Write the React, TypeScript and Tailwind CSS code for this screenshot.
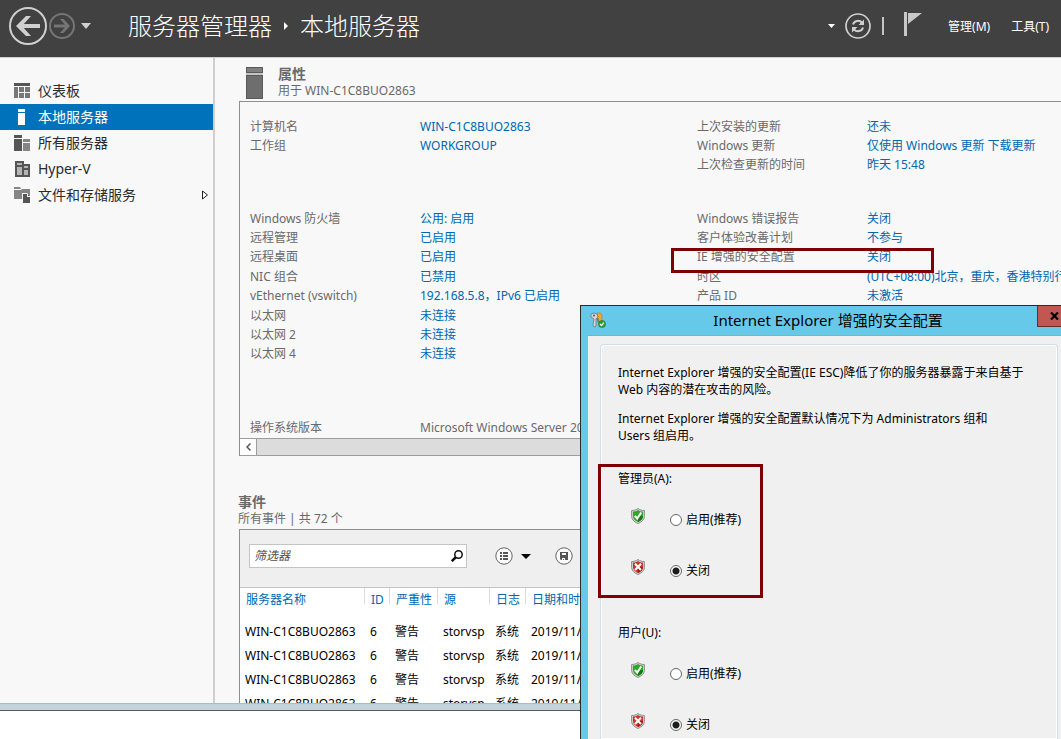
import React from "react";

type Row = [string, string, string, string];

const identityRows: Row[] = [
  ["计算机名", "WIN-C1C8BUO2863", "上次安装的更新", "还未"],
  ["工作组", "WORKGROUP", "Windows 更新", "仅使用 Windows 更新 下载更新"],
  ["", "", "上次检查更新的时间", "昨天 15:48"],
];

const networkRows: Row[] = [
  ["Windows 防火墙", "公用: 启用", "Windows 错误报告", "关闭"],
  ["远程管理", "已启用", "客户体验改善计划", "不参与"],
  ["远程桌面", "已启用", "IE 增强的安全配置", "关闭"],
  ["NIC 组合", "已禁用", "时区", "(UTC+08:00)北京，重庆，香港特别行政区，乌鲁木齐"],
  ["vEthernet (vswitch)", "192.168.5.8，IPv6 已启用", "产品 ID", "未激活"],
  ["以太网", "未连接", "", ""],
  ["以太网 2", "未连接", "", ""],
  ["以太网 4", "未连接", "", ""],
];

const events = [1, 2, 3, 4];

function BackIcon() {
  return (
    <svg width="38" height="38" viewBox="0 0 38 38" fill="none" stroke="#d0d0d0">
      <circle cx="19" cy="19" r="18" strokeWidth="2" />
      <path d="M31 19H10" strokeWidth="4" />
      <path d="M7 19 17 9h5l-9 10 9 10h-5z" fill="#d0d0d0" stroke="none" />
    </svg>
  );
}

function ForwardIcon() {
  return (
    <svg width="26" height="26" viewBox="0 0 26 26" fill="none" stroke="#757575">
      <circle cx="13" cy="13" r="12" strokeWidth="2" />
      <path d="M5 13h13" strokeWidth="3" />
      <path d="M21 13 14.500 6H11l6 7-6 7h3.500z" fill="#757575" stroke="none" />
    </svg>
  );
}

function RefreshIcon() {
  return (
    <svg width="26" height="26" viewBox="0 0 26 26" fill="none" stroke="#cfcfcf">
      <circle cx="13" cy="13" r="12" strokeWidth="1.700" />
      <path d="M8 11.500c1-4 6.500-5 9-1.800M18 14.500c-1 4-6.500 5-9 1.800" strokeWidth="2" />
      <path d="M19 6.500v5.500h-5.500zM7 19.500V14h5.500z" fill="#cfcfcf" stroke="none" />
    </svg>
  );
}

function DashboardIcon() {
  return (
    <svg width="16" height="16" viewBox="0 0 16 16" fill="#777">
      <path d="M0 0h16v3H0z" fill="#555" />
      <path d="M0 4h4v11H0zM5 4h5v5H5zM11 4h5v5h-5zM5 10h5v5H5zM11 10h5v5h-5z" />
    </svg>
  );
}

function LocalIcon() {
  return (
    <svg width="16" height="16" viewBox="0 0 16 16" fill="#fff">
      <path d="M4 0h7v3H4zM4 4h7v12H4z" />
    </svg>
  );
}

function AllServersIcon() {
  return (
    <svg width="16" height="16" viewBox="0 0 16 16" fill="#555">
      <path d="M0 0h8v3H0zM0 4h8v12H0z" />
      <path d="M9 4h7v3H9zM9 8h7v8H9z" fill="#858585" />
    </svg>
  );
}

function HyperVIcon() {
  return (
    <svg width="16" height="16" viewBox="0 0 16 16" fill="#555">
      <path d="M1 0h9v3h6v13H1z" />
      <path d="M3 2h5v2H3zM3 6h5v8H3zM10 5h4v2h-4zM10 9h4v5h-4z" fill="#b5b5b5" />
    </svg>
  );
}

function StorageIcon() {
  return (
    <svg width="16" height="16" viewBox="0 0 16 16" fill="#858585">
      <path d="M0 0h6l1 2H0zM0 3h7l1-1h8v10H0z" />
      <path d="M8 6h5l3 3v7H8z" fill="#f7f7f7" />
      <path d="M9 7h4v3h3v6H9z" fill="#555" />
      <path d="M14 7l2 2h-2z" fill="#555" />
    </svg>
  );
}

function KeysIcon() {
  return (
    <svg width="16" height="16" viewBox="0 0 16 16">
      <path d="M7 1h3l2 2v4l-1 3H9z" fill="#eba834" stroke="#b5731d" strokeWidth=".6" />
      <path d="M1 2l3-1 3 1 1 3-2 2v7l-2 1-1-2 1-6-3-2z" fill="#d5d5d5" stroke="#777" strokeWidth=".8" />
      <circle cx="4" cy="3.500" r="1" fill="#555" />
      <path d="M7 6l2 5" stroke="#777" strokeWidth="1.500" />
      <circle cx="12" cy="12" r="3.600" fill="#2e9e2c" stroke="#1c701f" strokeWidth=".5" />
      <path d="M10 12l1.500 1.600 2.500-3" fill="none" stroke="#fff" strokeWidth="1.300" />
    </svg>
  );
}

function Shield({ on }: { on: boolean }) {
  return (
    <svg width="14" height="16" viewBox="0 0 14 16" aria-hidden="true">
      <path
        d="M7 .5C5 2 3 2.500.600 2.500v6C.8 12 3.500 14 7 15.500c3.500-1.500 6.200-3.500 6.400-7v-6C11 2.500 9 2 7 .5z"
        fill="#cfd3d0"
        stroke="#8b8f8c"
        strokeWidth="1"
      />
      <path
        d="M7 2C5.500 3 4 3.500 2 3.600v4.900c.2 2.700 2.200 4.300 5 5.600 2.800-1.300 4.800-2.900 5-5.600V3.600C10 3.500 8.500 3 7 2z"
        fill={on ? "#2fa52b" : "#d2302d"}
      />
      <path d="M7 8h5c0 3-2.200 4.800-5 6.100z" fill={on ? "#137a14" : "#a51617"} />
      {on ? (
        <path d="M3.800 7.800l2.400 2.700L10.200 4.500" fill="none" stroke="#fff" strokeWidth="2" />
      ) : (
        <path d="M4 4.800l6 6.200M10 4.800l-6 6.200" stroke="#fff" strokeWidth="2" />
      )}
    </svg>
  );
}

const navItems = [
  { label: "仪表板", icon: <DashboardIcon /> },
  { label: "本地服务器", icon: <LocalIcon />, active: true },
  { label: "所有服务器", icon: <AllServersIcon /> },
  { label: "Hyper-V", icon: <HyperVIcon /> },
  { label: "文件和存储服务", icon: <StorageIcon />, expandable: true },
];

function Header() {
  return (
    <header className="flex h-[58px] shrink-0 items-center border-b border-[#d0d0d0] bg-[#414141] pb-[5px] text-white">
      <button aria-label="后退" className="ml-[9px]">
        <BackIcon />
      </button>
      <button aria-label="前进" className="ml-[2px]">
        <ForwardIcon />
      </button>
      <button aria-label="历史记录" className="ml-[6px]">
        <svg width="10" height="6" viewBox="0 0 10 6">
          <path d="M0 0h10L5 6z" fill="#d0d0d0" />
        </svg>
      </button>
      <h1 className="ml-[37px] flex items-center gap-[11px] text-2xl font-light whitespace-nowrap">
        服务器管理器
        <svg width="6" height="8" viewBox="0 0 6 8">
          <path d="M1 0l4 4-4 4z" fill="#fff" />
        </svg>
        本地服务器
      </h1>
      <div className="ml-auto flex items-center pr-[12px]">
        <button aria-label="更多">
          <svg width="7" height="4" viewBox="0 0 7 4">
            <path d="M0 0h7L3.500 4z" fill="#fff" />
          </svg>
        </button>
        <button aria-label="刷新" className="ml-[10px]">
          <RefreshIcon />
        </button>
        <span className="ml-[11px] h-[18px] w-[2px] bg-[#c4c4c4]" />
        <button aria-label="通知" className="ml-[20px] -mt-1">
          <svg width="18" height="24" viewBox="0 0 18 24" fill="#c8c8c8">
            <path d="M0 0h3v24H0zM4 1h14L4 12z" />
          </svg>
        </button>
        <button className="mt-[2px] ml-[26px] text-xs">管理(M)</button>
        <button className="mt-[2px] ml-[21px] text-xs">工具(T)</button>
      </div>
    </header>
  );
}

function Sidebar() {
  return (
    <nav className="w-[215px] shrink-0 border-r-2 border-[#cfcfcf] pt-[20px]">
      {navItems.map((item) => (
        <a
          key={item.label}
          href="#"
          className={
            item.active
              ? "flex h-[26px] items-center bg-[#0072bc] pl-[14px] text-sm text-white"
              : "flex h-[26px] items-center pl-[14px] text-sm text-[#2b2b2b]"
          }
        >
          {item.icon}
          <span className="ml-2">{item.label}</span>
          {item.expandable && (
            <svg className="mr-1 ml-auto" width="8" height="10" viewBox="0 0 8 10">
              <path d="M1.500 1v8L6.500 5z" fill="#fff" stroke="#222" />
            </svg>
          )}
        </a>
      ))}
    </nav>
  );
}

function PropertyGroup({ rows, className }: { rows: Row[]; className: string }) {
  return (
    <div className={className}>
      {rows.map((r, i) => (
        <div
          key={i}
          className="grid grid-cols-[170px_277px_170px_1fr] items-center whitespace-nowrap text-[#6a6a6a]"
        >
          <span>{r[0]}</span>
          <a href="#" className="text-[#0067b0]">{r[1]}</a>
          <span>{r[2]}</span>
          <a href="#" className="text-[#0067b0]">{r[3]}</a>
        </div>
      ))}
    </div>
  );
}

function Properties() {
  return (
    <section className="ml-6">
      <div className="flex h-[43px] pt-[8px] pl-[7px]">
        <svg className="mt-px" width="17" height="32" viewBox="0 0 17 32">
          <path d="M0 0h17v32H0z" fill="#5a5a5a" />
          <path d="M1 1h15v4H1z" fill="#808080" />
          <path d="M0 6h17v2H0z" fill="#c4c4c4" />
          <path d="M1 9h15v22H1z" fill="#6e6e6e" />
        </svg>
        <div className="ml-[15px] text-[#6a6a6a]">
          <h2 className="text-sm leading-4 font-bold">属性</h2>
          <p className="text-xs leading-[18px]">用于 WIN-C1C8BUO2863</p>
        </div>
      </div>
      <div className="relative overflow-hidden border-t border-l border-[#8f8f8f] text-xs">
        <div className="pt-[15px] pl-[10px]">
          <PropertyGroup rows={identityRows} className="grid h-[58px] auto-rows-fr" />
          <PropertyGroup rows={networkRows} className="mt-[34px] grid h-[155px] auto-rows-fr" />
          <div className="mt-[54px] flex h-[20px] items-center whitespace-nowrap text-[#6a6a6a]">
            <span className="w-[170px]">操作系统版本</span>
            <span>Microsoft Windows Server 2012 R2 Standard</span>
          </div>
        </div>
        <div className="flex h-[18px] border-y border-[#9d9d9d] bg-[#dcdcdc]">
          <button
            aria-label="向左滚动"
            className="flex w-[17px] items-center justify-center border-r border-[#9d9d9d] bg-white"
          >
            <svg width="5" height="8" viewBox="0 0 5 8" fill="none" stroke="#555" strokeWidth="1.500">
              <path d="M4.500.5L1 4l3.500 3.500" />
            </svg>
          </button>
        </div>
        <div className="absolute top-[146px] left-[431px] h-[25px] w-[263px] border-3 border-[#7f0000]" />
      </div>
    </section>
  );
}

function Events() {
  return (
    <section className="mt-[38px] flex min-h-0 flex-1 flex-col">
      <div className="ml-[23px] h-[35px] text-[#6a6a6a]">
        <h2 className="text-sm leading-4 font-bold">事件</h2>
        <p className="text-xs leading-[18px]">所有事件 | 共 72 个</p>
      </div>
      <div className="ml-6 min-h-0 flex-1 overflow-hidden border-t border-l border-[#8f8f8f] bg-white">
        <div className="flex h-[57px] items-center bg-[#efefef] pb-[5px] pl-[9px]">
          <label className="flex h-[24px] w-[218px] items-center border border-[#c4c4c4] bg-white pr-[3px] pl-[4px]">
            <input
              aria-label="筛选器"
              placeholder="筛选器"
              className="min-w-0 flex-1 text-xs italic outline-none placeholder:text-[#505050]"
            />
            <svg width="12" height="12" viewBox="0 0 12 12" fill="none" stroke="#111">
              <circle cx="7.500" cy="4.500" r="3.700" strokeWidth="1.500" />
              <path d="M5 7L.8 11.200" strokeWidth="2.500" />
            </svg>
          </label>
          <button aria-label="视图" className="ml-[28px]">
            <svg width="18" height="18" viewBox="0 0 18 18">
              <circle cx="9" cy="9" r="8.200" fill="#fafafa" stroke="#666" />
              <path d="M5 5h2v2H5zM8 5h5v2H8zM5 8h2v2H5zM8 8h5v2H8zM5 11h2v2H5zM8 11h5v2H8z" fill="#555" />
            </svg>
          </button>
          <button aria-label="视图选项" className="ml-[8px]">
            <svg width="10" height="5" viewBox="0 0 10 5">
              <path d="M0 0h10L5 5z" />
            </svg>
          </button>
          <button aria-label="保存" className="ml-[24px]">
            <svg width="18" height="18" viewBox="0 0 18 18">
              <circle cx="9" cy="9" r="8.200" fill="#fafafa" stroke="#666" />
              <path d="M5 5h8v8H6l-1-1z" fill="#555" />
              <path d="M7 6h4v2H7z" fill="#fafafa" />
              <path d="M7 11h3v2H9v-1H8v1H7z" fill="#fafafa" />
            </svg>
          </button>
        </div>
        <table className="w-full table-fixed border-t border-[#c4c4c4] text-left text-xs whitespace-nowrap">
          <colgroup>
            <col className="w-[125px]" />
            <col className="w-[25px]" />
            <col className="w-[48px]" />
            <col className="w-[52px]" />
            <col className="w-[36px]" />
            <col />
          </colgroup>
          <thead>
            <tr className="h-[32px] align-top text-[#0067b0]">
              {["服务器名称", "ID", "严重性", "源", "日志", "日期和时间"].map((h) => (
                <th key={h} className="p-0 font-normal">
                  <div className="h-[16px] border-r border-[#dcdcdc] pt-[4px] pl-[6px] leading-4">{h}</div>
                </th>
              ))}
            </tr>
          </thead>
          <tbody>
            {events.map((n) => (
              <tr key={n} className="h-[24px] text-black">
                {["WIN-C1C8BUO2863", "6", "警告", "storvsp", "系统", "2019/11/20 15:48"].map((c) => (
                  <td key={c} className="p-0 pl-[5px]">{c}</td>
                ))}
              </tr>
            ))}
          </tbody>
        </table>
      </div>
    </section>
  );
}

function ChoiceGroup({ title, name }: { title: string; name: string }) {
  return (
    <fieldset>
      <legend className="leading-4">{title}</legend>
      <div className="flex flex-col gap-[31px] pt-[21px] pl-[13px]">
        {[
          { on: true, label: "启用(推荐)" },
          { on: false, label: "关闭" },
        ].map((o) => (
          <div key={o.label} className="flex h-[20px] items-start">
            <Shield on={o.on} />
            <label className="mt-1 ml-[25px] flex items-center gap-1 leading-4">
              <input
                type="radio"
                name={name}
                defaultChecked={!o.on}
                className="size-[12px] appearance-none rounded-full border border-[#666] bg-white checked:bg-[radial-gradient(circle,#1c1c1c_3px,#fff_4px)]"
              />
              {o.label}
            </label>
          </div>
        ))}
      </div>
    </fieldset>
  );
}

function SecurityDialog() {
  return (
    <div
      role="dialog"
      aria-labelledby="dialog-title"
      className="absolute top-[305px] right-0 bottom-0 left-[580px] flex flex-col overflow-hidden border-t border-l border-[#2b2b2b] bg-[#66c9e9] pl-[7px] text-xs text-black"
    >
      <div className="flex h-[29px] shrink-0 items-start">
        <span className="mt-[6px] ml-[2px]">
          <KeysIcon />
        </span>
        <h2 id="dialog-title" className="flex-1 pl-[13px] text-center text-[15px] leading-[29px]">
          Internet Explorer 增强的安全配置
        </h2>
        <button
          aria-label="关闭"
          className="flex h-[21px] w-[24px] items-center justify-end border-b border-l border-[#6b2a26] bg-[#c1584f] pr-[2px]"
        >
          <svg width="9" height="8" viewBox="0 0 9 8">
            <path d="M1 .5l7 7M8 .5l-7 7" stroke="#000" strokeWidth="2.200" />
          </svg>
        </button>
      </div>
      <div className="min-h-0 flex-1 border-t border-[#7eb0c6] bg-[#f0f0f0] pt-[8px] pr-[3px] pl-[12px]">
        <div className="relative h-full rounded-t border border-b-0 border-[#d0deea] pt-[19px] pl-[17px] inset-shadow-[0_0_0_1px_#fff]">
          <p className="leading-[17px] whitespace-nowrap">
            Internet Explorer 增强的安全配置(IE ESC)降低了你的服务器暴露于来自基于
            <br />
            Web 内容的潜在攻击的风险。
          </p>
          <p className="mt-[12px] mb-[27px] leading-[17px] whitespace-nowrap">
            Internet Explorer 增强的安全配置默认情况下为 Administrators 组和
            <br />
            Users 组启用。
          </p>
          <ChoiceGroup title="管理员(A):" name="admin" />
          <div className="mt-[46px]">
            <ChoiceGroup title="用户(U):" name="user" />
          </div>
          <div className="absolute top-[119px] left-[-3px] h-[134px] w-[165px] border-3 border-[#7f0000]" />
        </div>
      </div>
    </div>
  );
}

export default function App() {
  return (
    <div className="relative flex h-screen flex-col overflow-hidden bg-white font-['Noto_Sans','Noto_Sans_CJK_SC',sans-serif]">
      <Header />
      <div className="flex min-h-0 flex-1 bg-[#f8f8f8]">
        <Sidebar />
        <main className="flex min-w-0 flex-1 flex-col">
          <Properties />
          <Events />
        </main>
      </div>
      <div className="h-[8px] shrink-0 border-t border-b border-t-[#a9bcc4] border-b-[#55595c] bg-[#c3d4da]" />
      <div className="h-[28px] shrink-0" />
      <SecurityDialog />
    </div>
  );
}
